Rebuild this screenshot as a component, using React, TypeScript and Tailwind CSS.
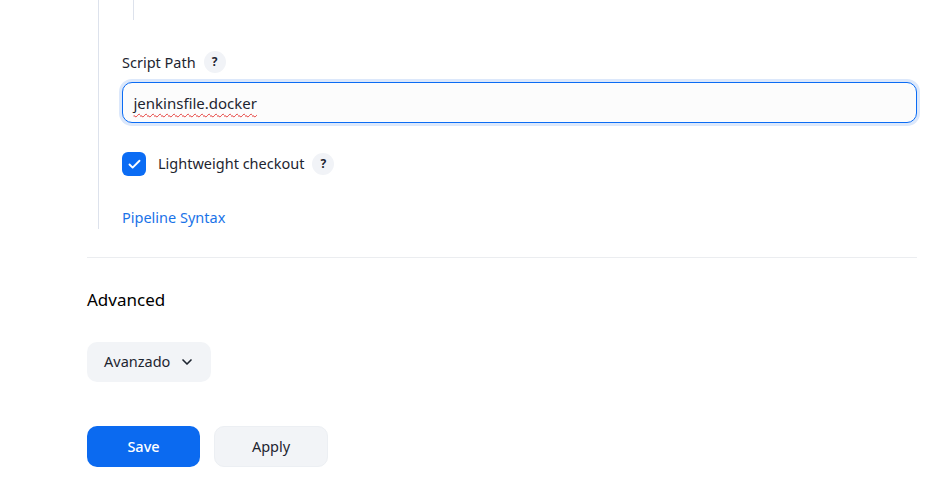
import { Check, ChevronDown } from 'lucide-react'

function HelpBadge() {
  return (
    <span className="ml-2 inline-flex h-[22px] w-[22px] items-center justify-center rounded-full bg-[#f1f3f7] text-[12px] font-bold text-[#1e2530]">
      ?
    </span>
  )
}

export default function App() {
  return (
    <div className="h-[498px] w-[927px] overflow-hidden bg-white font-['Noto_Sans',sans-serif] text-[#1e2530]">
      <div className="box-content w-[830px] pl-[87px]">
        <div className="ml-[11px] border-l border-[#dde2ec] pl-[23px]">
          <div className="ml-[11px] h-[20px] border-l border-[#dde2ec]" />

          <div className="mt-[31px] flex items-center text-[14.5px] leading-[22px]">
            Script Path
            <HelpBadge />
          </div>

          <div className="mt-[9px] flex h-[41px] w-full items-center rounded-[10px] border-[1.5px] border-[#0b6cf4] bg-[#fcfcfc] px-[10.5px] pt-[2px] text-[15px] text-[#1e2530] ring-[3px] ring-[#dce8fb]">
            <span className="underline decoration-[#e53935] decoration-wavy decoration-1 underline-offset-[4px]">jenkinsfile.docker</span>
          </div>

          <div className="mt-[29px] flex items-center">
            <span className="flex h-[24px] w-[24px] items-center justify-center rounded-[6px] bg-[#0b6cf4]">
              <Check className="h-[15px] w-[15px] text-white" strokeWidth={3} />
            </span>
            <span className="ml-[12px] text-[14.5px]">Lightweight checkout</span>
            <HelpBadge />
          </div>

          <div className="pt-[29px]">
            <a href="#" className="text-[14.5px] leading-[22px] text-[#1a73e8]">
              Pipeline Syntax
            </a>
          </div>
        </div>

        <div className="mt-[28px] h-px bg-[#ebedf0]" />

        <div className="mt-[31px] text-[17px] leading-[22px] text-black">Advanced</div>

        <button className="mt-[31px] flex h-[40px] items-center gap-[9px] rounded-[10px] bg-[#f2f4f7] pl-[17px] pr-[16px] text-[14.5px] text-[#1e2530]">
          Avanzado
          <ChevronDown className="h-[16px] w-[16px]" strokeWidth={2.5} />
        </button>

        <div className="mt-[44px] flex gap-[14px]">
          <button className="h-[41px] w-[113px] rounded-[10px] bg-[#0b6af0] text-[14.5px] font-medium text-white">Save</button>
          <button className="h-[41px] w-[114px] rounded-[10px] border border-[#eceff3] bg-[#f2f4f7] text-[14.5px] text-[#1e2530]">
            Apply
          </button>
        </div>
      </div>
    </div>
  )
}
